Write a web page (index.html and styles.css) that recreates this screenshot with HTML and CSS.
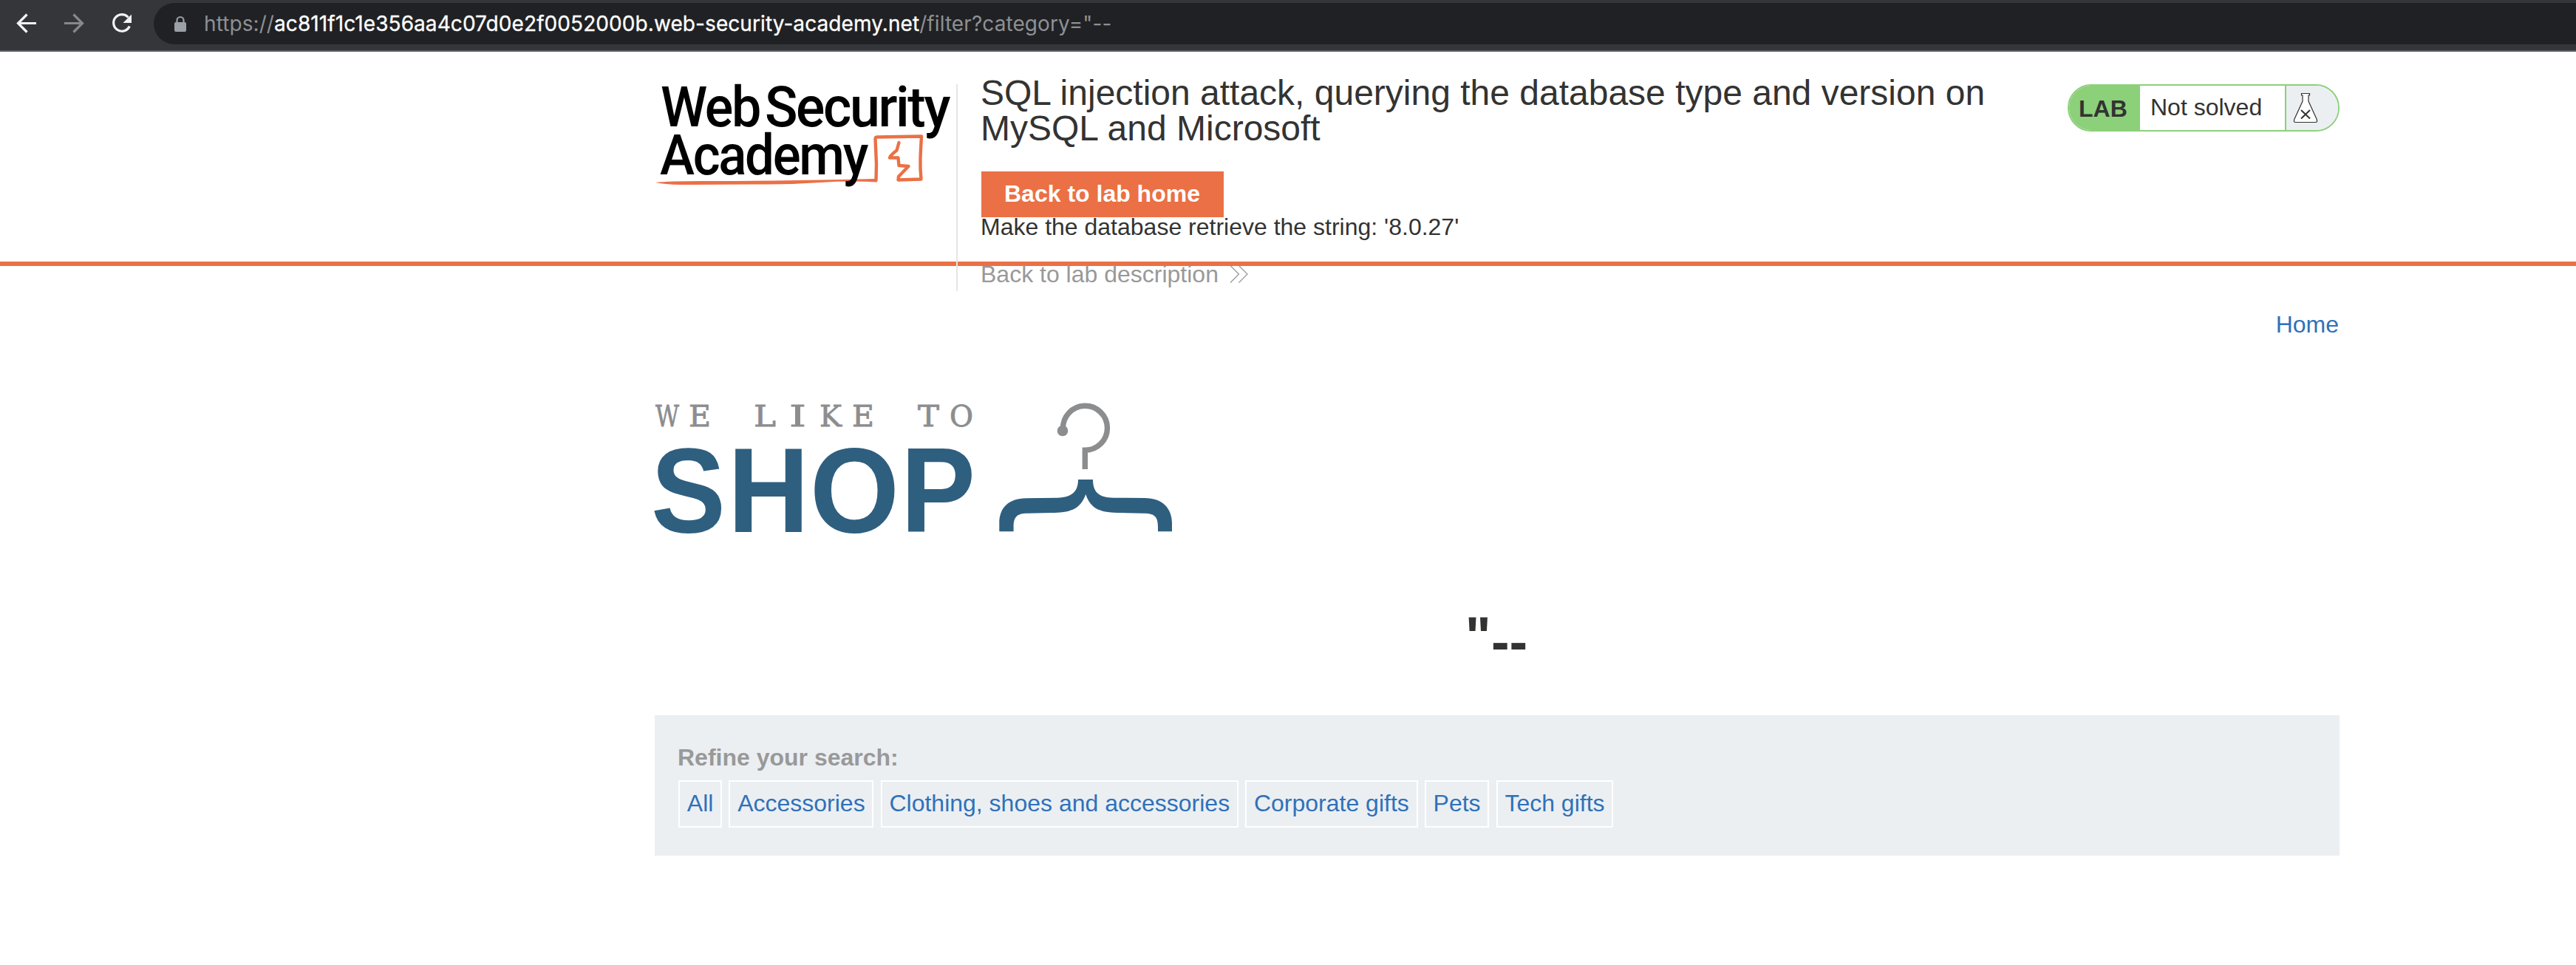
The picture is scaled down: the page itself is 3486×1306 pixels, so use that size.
FILE: index.html
```html
<!DOCTYPE html>
<html lang="en">
<head>
<meta charset="utf-8">
<title>SQL injection attack, querying the database type and version on MySQL and Microsoft</title>
<link rel="stylesheet" href="styles.css">
</head>
<body>
<div class="toolbar">
  <svg class="nav-icons" width="190" height="68" viewBox="0 0 190 68" fill="none" stroke-width="3.2">
    <path d="M49 31.5H25M36.5 19.5L24.5 31.5L36.5 43.5" stroke="#f1f3f4"/>
    <path d="M87 31.5H111M99.5 19.5L111.500 31.5L99.500 43.5" stroke="#86888b"/>
    <path d="M173.500 23.500A11.300 11.300 0 1 0 175.300 35.500" stroke="#f1f3f4"/>
    <path d="M178 19.500V31H166.500Z" fill="#f1f3f4"/>
  </svg>
  <div class="address">
    <svg class="lock" width="18" height="24" viewBox="0 0 18 24">
      <rect x="1" y="9" width="16" height="13" rx="2" fill="#9aa0a6"/>
      <path d="M4.500 10V6.500a4.500 4.500 0 0 1 9 0V10" fill="none" stroke="#9aa0a6" stroke-width="2.200"/>
    </svg>
    <div class="url">https://<span class="host">ac811f1c1e356aa4c07d0e2f0052000b.web-security-academy.net</span>/filter?category="--</div>
  </div>
</div>

<header class="lab-header">
  <div class="container header-row">
    <svg class="academy-logo" width="408" height="160" viewBox="886 101 408 160">
      <path d="M887 247Q905 244.800 960 245T1080 244T1184 242L1187 246.500Q1150 244.500 1110 247T1040 249.500T920 250Q900 249.500 887 247Z" fill="#eb7045"/>
      <path d="M1185.500 244L1186 222L1184.500 188Q1184.500 185 1188 185.500L1247 184.500Q1246 200 1245.500 214T1246.500 242.500L1215.500 243.500L1216 239L1229.500 225L1216.500 224L1215.500 213.500L1204 213.500Q1205 210 1213.500 203.500L1216.500 193" fill="none" stroke="#eb7045" stroke-width="4.400" stroke-linejoin="round" stroke-linecap="round"/>
      <g class="academy-text">
        <text x="894" y="171" textLength="134" lengthAdjust="spacingAndGlyphs">Web</text>
        <text x="1035" y="171" textLength="249" lengthAdjust="spacingAndGlyphs">Security</text>
        <text x="893" y="236" textLength="280" lengthAdjust="spacingAndGlyphs">Academy</text>
      </g>
    </svg>
    <div class="divider"></div>
    <div class="title-block">
      <h2 class="title">SQL injection attack, querying the database type and version on<br>MySQL and Microsoft</h2>
      <a class="lab-home">Back to lab home</a>
      <p class="hint">Make the database retrieve the string: '8.0.27'</p>
      <a class="lab-description">Back to lab description
        <svg width="26" height="26" viewBox="0 0 26 26" fill="none" stroke="#999" stroke-width="1.300"><path d="M1 1.500L12.500 13L1 24.500M12.500 1.500L24 13L12.500 24.500"/></svg>
      </a>
    </div>
    <div class="status">
      <span class="status-lab">LAB</span>
      <span class="status-text">Not solved</span>
      <span class="status-icon">
        <svg width="34" height="42" viewBox="0 0 34 42" stroke="#333332">
          <path d="M11.500 1.500H22.500V4H21V12L32.200 36.500Q33.500 40.500 30.500 40.500H3.500Q.5 40.500 1.800 36.500L13 12V4H11.500Z" fill="#fff" stroke-width="1.200"/>
          <path d="M11 24L23 35.500M23 24L11 35.500" fill="none" stroke-width="2"/>
        </svg>
      </span>
    </div>
  </div>
</header>

<main class="container">
  <nav class="top-links"><a>Home</a></nav>
  <svg class="shop-logo" width="720" height="190" viewBox="880 538 720 190">
    <g class="tagline">
      <text x="887" y="577" textLength="32" lengthAdjust="spacingAndGlyphs">W</text>
      <text x="932" y="577" textLength="30" lengthAdjust="spacingAndGlyphs">E</text>
      <text x="1020" y="577" textLength="30" lengthAdjust="spacingAndGlyphs">L</text>
      <text x="1068" y="577" textLength="23" lengthAdjust="spacingAndGlyphs">I</text>
      <text x="1109" y="577" textLength="30" lengthAdjust="spacingAndGlyphs">K</text>
      <text x="1153" y="577" textLength="30" lengthAdjust="spacingAndGlyphs">E</text>
      <text x="1242" y="577" textLength="29" lengthAdjust="spacingAndGlyphs">T</text>
      <text x="1285" y="577" textLength="32" lengthAdjust="spacingAndGlyphs">O</text>
    </g>
    <g class="shop-word">
      <text x="881" y="720" textLength="101" lengthAdjust="spacingAndGlyphs">S</text>
      <text x="985" y="720" textLength="110" lengthAdjust="spacingAndGlyphs">H</text>
      <text x="1096" y="720" textLength="121" lengthAdjust="spacingAndGlyphs">O</text>
      <text x="1219" y="720" textLength="101" lengthAdjust="spacingAndGlyphs">P</text>
    </g>
    <path d="M1438.500 580.500A30 30 0 1 1 1468.300 609.300V635" fill="none" stroke="#8c8d8f" stroke-width="7.400"/>
    <circle cx="1438" cy="583" r="7.300" fill="#8c8d8f"/>
    <path d="M1459 649H1479C1479 665 1486 673.700 1507 673.700L1549 674C1573 674 1586 688 1586 708V719.300H1567V713C1567 699 1562 694.700 1548 694.700L1517 694C1491 694 1476 690 1469.300 669C1462 690 1447 694 1422 694L1390 694.700C1376 694.700 1371.600 700 1371.600 713V719.300H1352.300V708C1352.300 688 1364 674.500 1389 674.300L1431 673.700C1452 673 1459 664 1459 649Z" fill="#2f5f7f"/>
  </svg>
  <h1 class="category">"<span class="dashes">--</span></h1>
  <section class="filters">
    <span class="filters-label">Refine your search:</span>
    <div class="filter-list"><a>All</a><a>Accessories</a><a>Clothing, shoes and accessories</a><a>Corporate gifts</a><a>Pets</a><a>Tech gifts</a></div>
  </section>
</main>
</body>
</html>
```

FILE: styles.css
```css
* { box-sizing: border-box; }
html { overflow: hidden; }
body {
  margin: 0;
  height: 1306px;
  overflow: hidden;
  background: #fff;
  color: #333332;
  font: 32px/36px "Liberation Sans", Arial, sans-serif;
}
svg { display: block; flex: none; overflow: visible; }

.toolbar {
  display: flex;
  height: 70px;
  background: #35363a;
  border-bottom: 2px solid #5c5e62;
}
.nav-icons { margin-right: 18px; }
.address {
  flex: 1;
  display: flex;
  height: 56px;
  margin-top: 4px;
  padding-left: 27px;
  background: #202124;
  border-radius: 28px 0 0 28px;
}
.lock { margin: 17px 23px 0 0; }
.url {
  font: 28px/57px Inter, Roboto, sans-serif;
  letter-spacing: .08px;
  color: #8e9093;
  white-space: nowrap;
}
.host {
  color: #fff;
  -webkit-text-stroke: .3px #fff;
}

.container {
  width: 2280px;
  margin-left: 886px;
}
.lab-header {
  height: 290px;
  border-bottom: 6px solid #eb7045;
}
.header-row {
  display: flex;
  align-items: flex-start;
  padding-top: 31px;
}
.academy-text {
  font: 500 76px Roboto, sans-serif;
  letter-spacing: -2.5px;
  fill: #000;
}
.divider {
  width: 2px;
  height: 280px;
  margin-top: 13px;
  background: #e5e5e5;
}
.title-block { flex: 1; padding-left: 31px; }
.title {
  margin: 0;
  padding-top: 1px;
  font-size: 48px;
  font-weight: 400;
  line-height: 48px;
  white-space: nowrap;
}
.lab-home {
  display: block;
  width: 328px;
  height: 62px;
  margin: 34px 0 0 1px;
  padding-left: 31px;
  background: #eb7045;
  color: #fff;
  font-weight: 700;
  line-height: 61px;
}
.hint { margin: -5px 0 28px; }
.lab-description {
  display: flex;
  gap: 15px;
  align-items: center;
  color: #999;
}
.status {
  display: flex;
  width: 368px;
  height: 64px;
  margin-top: 13px;
  border: 2px solid #8cd07a;
  border-radius: 32px;
  overflow: hidden;
  line-height: 58px;
}
.status-lab {
  width: 96px;
  padding: 2px 0 0 13px;
  background: #8cd07a;
  font-weight: 700;
}
.status-text { width: 196px; padding-left: 14px; }
.status-icon {
  flex: 1;
  padding: 9px 0 0 9px;
  background: #ebeff2;
  border-left: 2px solid #8cd07a;
}

.top-links {
  padding: 61px 1px 0 0;
  text-align: right;
}
.top-links a, .filter-list a { color: #3071b9; }
.shop-logo { margin: 81px 0 0 -6px; }
.tagline {
  font: 40px "DejaVu Serif", serif;
  fill: #8c8d8f;
  stroke: #8c8d8f;
  stroke-width: .8px;
}
.shop-word {
  font: 700 163px "Liberation Sans", Arial, sans-serif;
  fill: #2f5f7f;
}
.category {
  margin: 88px 2px 0 0;
  font-size: 74px;
  line-height: 92px;
  text-align: center;
}
.dashes {
  line-height: 0;
  vertical-align: -7px;
}
.filters {
  height: 190px;
  margin-top: 60px;
  padding: 39px 32px 0;
  background: #ebeff2;
}
.filters-label {
  display: block;
  margin-left: -1px;
  color: #999;
  font-weight: 700;
}
.filter-list {
  display: flex;
  gap: 9.2px;
  margin-top: 13px;
}
.filter-list a {
  height: 64px;
  padding: 0 9.800px;
  border: 2px solid #fff;
  line-height: 58px;
}
```
